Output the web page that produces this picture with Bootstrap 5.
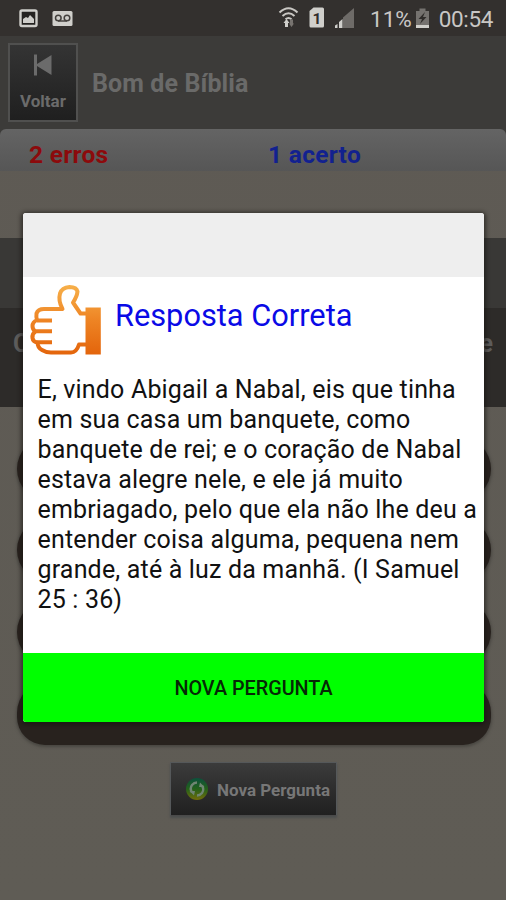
<!DOCTYPE html>
<html lang="pt">
<head>
<meta charset="utf-8">
<meta name="viewport" content="width=device-width, initial-scale=1">
<title>Bom de Bíblia</title>
<link href="https://cdn.jsdelivr.net/npm/bootstrap@5.3.0/dist/css/bootstrap.min.css" rel="stylesheet">
<style>
body{font-family:Roboto,"Liberation Sans",sans-serif;background:#5f5b54;height:900px;overflow:hidden;color:#666}
.screen{height:900px;background:linear-gradient(#5e5a54,#5f5c55)}
.status{height:36px;background:#33302e;color:#c9c7c5;font-size:22.5px;line-height:38px;white-space:nowrap}
.status svg{flex:none}
.clock{font-size:22.5px;letter-spacing:-.35px}
.topbar{height:93px;background:#3c3b39}
.back{width:70px;height:79px;margin:7px 0 0 8px;border:2px solid #50504f;background:linear-gradient(#343434,#1f1f1f);color:#6b6b6b;font-size:17px;line-height:20px}
.back span{margin-top:14px}
.title{font-size:25px;line-height:30px;letter-spacing:.1px;margin:33px 0 0 14px;color:#6a6a69}
.score{height:42px;background:linear-gradient(#646464,#565656);border-radius:6px 6px 0 0;font-size:24.5px;line-height:52px;letter-spacing:.3px}
.score-wrap{background:#3c3b39}
.errs{width:268px;padding-left:29px;color:#8c0a0c}
.hits{color:#12218f}
.band-a{margin-top:67px;height:70px;background:#393836}
.band-b{height:99px;background:#2d2b29;font-size:25px;padding:0 13px 0 13px;line-height:71px;color:#5d5c5b}
.answers{padding:30px 15px 0 17px;gap:17.3px}
.answer{height:64px;border-radius:32px;background:#28221e;box-shadow:0 1px 3px 1px #484641}
.answer:last-child{border-radius:32px 32px 28px 28px}
.again{width:167px;height:54px;margin:17px 0 0 170px;border:1px solid #55585a;border-bottom-color:#4a4a4a;background:linear-gradient(#3b3b3b,#202020);box-shadow:0 2px 2px #4c4e4e;color:#777;font-size:17px;padding-left:14px}
.again span{padding-top:3px}
.dialog-box{left:23px;top:213px;width:461px;height:509px;border-radius:3px;box-shadow:0 1px 4px 2px rgba(20,18,15,.6);overflow:hidden}
.dialog-top{height:64px;background:#eee}
.dialog-head{height:98px;color:#0a0ae6;font-size:30.75px;line-height:38px}
.verse{height:278px;padding-left:14.5px;font-size:25px;letter-spacing:.17px;line-height:30px;color:#111;white-space:nowrap}
.verse span{display:block}
.ok{height:69px;padding-top:3px;background:#0f0;color:#062806;font-size:19.8px}
</style>
</head>
<body>
<div class="screen d-flex flex-column position-relative">
  <div class="status d-flex flex-shrink-0">
    <svg width="370" height="36" viewBox="0 0 370 36">
      <rect x="20.5" y="10.500" width="16" height="15.500" rx="1.500" fill="#252321" stroke="#d0cfcb" stroke-width="2.400"/>
      <path d="M23 23v-4l3-2 2 1 2-3 4 4v4z" fill="#d0cfcb"/>
      <rect x="52.500" y="11" width="20" height="15" rx="1.500" fill="#d0cfcb"/>
      <g fill="none" stroke="#44413e" stroke-width="1.500"><circle cx="58.300" cy="18" r="2.800"/><circle cx="67" cy="18" r="2.800"/><path d="M58 21h9"/></g>
      <g fill="none" stroke="#c9c7c3" stroke-width="2"><path d="M279.500 12.500q9-8.500 18 0M282.500 16q6-5.500 12 0M285.500 19.200q3-2.500 6 0"/></g>
      <path d="M285 27v-4h-1.500l3-4 3 4h-1.500v4z" fill="#d0cfcb"/><path d="M290 19.500v4h-1l2.500 3.500 2.500-3.500h-1v-4z" fill="#77736f"/>
      <path d="M309.500 11l4-3.500h9q1.500 0 1.500 1.500v17q0 1.500-1.500 1.500h-11.500q-1.500 0-1.500-1.500z" fill="#d0cfcb"/>
      <text x="312.500" y="23.500" font-size="15.500" font-weight="700" fill="#302d2b">1</text>
      <path d="M343 17.500L354 8v20h-11z" fill="#6e6b68"/><path d="M335 25.500l2.500-1.500v4H335zM339 22l3.500-3v9H339z" fill="#d0cfcb"/>
    </svg>
    <span>11%</span>
    <svg width="27" height="36" viewBox="0 0 27 36"><g transform="translate(-1.500 0)"><path d="M5.500 11h3.500V8.500h6V11h3.500v17h-13z" fill="#75726f"/><path d="M5.500 25h13v3h-13z" fill="#d0cfcb"/><path d="M14.500 12l-6.500 7h3.500l-2 5 6.500-7h-3.500z" fill="#302d2b"/></g></svg>
    <span class="clock">00:54</span>
  </div>
  <div class="topbar d-flex flex-shrink-0 align-items-start">
    <div class="back d-flex flex-column align-items-center fw-bold">
      <svg width="20" height="24" viewBox="0 0 20 24" class="mt-2"><path d="M1 1.500h3v9.500L18.500 2v20L4 13v9.500H1z" fill="#6b6b6b"/></svg>
      <span>Voltar</span>
    </div>
    <div class="title fw-bold">Bom de Bíblia</div>
  </div>
  <div class="score-wrap flex-shrink-0"><div class="score d-flex fw-bold"><div class="errs">2 erros</div><div class="hits">1 acerto</div></div></div>
  <div class="band-a flex-shrink-0"></div>
  <div class="band-b flex-shrink-0 d-flex justify-content-between fw-bold"><span>C</span><span>e</span></div>
  <div class="answers d-flex flex-column flex-shrink-0">
    <div class="answer"></div><div class="answer"></div><div class="answer"></div><div class="answer"></div>
  </div>
  <div class="again d-flex align-items-center fw-bold flex-shrink-0">
    <svg width="24" height="24" viewBox="0 0 24 24" class="me-2"><defs><linearGradient id="orb" x1="0" y1="0" x2="0" y2="1"><stop offset="0" stop-color="#0c503c"/><stop offset=".5" stop-color="#24611a"/><stop offset="1" stop-color="#726d0c"/></linearGradient></defs><circle cx="12" cy="12" r="11" fill="url(#orb)"/><g fill="none" stroke="#6f8573" stroke-width="2.400"><path d="M7 15.500q-2.500-4 0-7.500 2-2.500 5-2.500M17 8.500q2.500 4 0 7.500-2 2.500-5 2.500"/></g><path d="M4.500 14h5.500l-1 4.500zM19.500 10h-5.500l1-4.500z" fill="#6f8573"/></svg>
    <span>Nova Pergunta</span>
  </div>

  <div class="dialog-box position-absolute bg-white">
    <div class="dialog-top"></div>
    <div class="dialog-head d-flex">
      <svg width="92" height="90" viewBox="23 277 92 90" class="flex-shrink-0">
        <defs><linearGradient id="hand" gradientUnits="userSpaceOnUse" x1="0" y1="285" x2="0" y2="355"><stop offset="0" stop-color="#f7b04a"/><stop offset=".5" stop-color="#ee8424"/><stop offset="1" stop-color="#e3640b"/></linearGradient></defs>
        <path d="M86 313.500h-5.500L73 302.500q4-6 4.500-11-1-4.500-8-4.500-7.500.5-9.500 6.500-2 7 2.500 15.500H44q-6 0-7.500 4.500-.5 4 .5 6.500-4.500 2-4.500 6t3 5.500q-3.500 2-3 6.500.5 4 5 4.500 0 5 4.500 7.500 4 2.500 9 2.500h20q5.500 0 8-8H86M37 320.500h15M35 331.300h17M37 342.300h15" fill="none" stroke="url(#hand)" stroke-width="4" stroke-linejoin="round"/>
        <path d="M85.500 307.500h15.300v47H85.500z" fill="url(#hand)"/>
      </svg>
      <span class="headline pt-3 mt-1">Resposta Correta</span>
    </div>
    <div class="verse"><span>E, vindo Abigail a Nabal, eis que tinha</span><span>em sua casa um banquete, como</span><span>banquete de rei; e o coração de Nabal</span><span>estava alegre nele, e ele já muito</span><span>embriagado, pelo que ela não lhe deu a</span><span>entender coisa alguma, pequena nem</span><span>grande, até à luz da manhã. (I Samuel</span><span>25 : 36)</span></div>
    <div class="ok d-flex align-items-center justify-content-center fw-medium">NOVA PERGUNTA</div>
  </div>
</div>
<script src="https://cdn.jsdelivr.net/npm/bootstrap@5.3.0/dist/js/bootstrap.bundle.min.js"></script>
</body>
</html>
